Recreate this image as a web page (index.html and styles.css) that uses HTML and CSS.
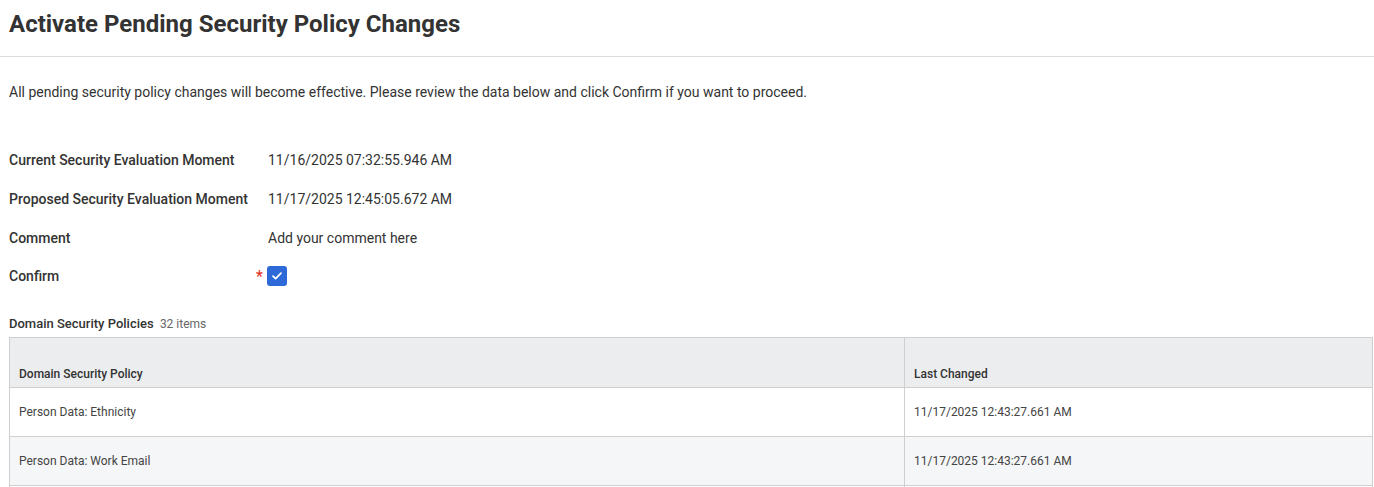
FILE: index.html
```html
<!DOCTYPE html>
<html>
<head>
<meta charset="utf-8">
<link rel="stylesheet" href="styles.css">
</head>
<body>
<header class="page-header">
  <h1 class="title">Activate Pending Security Policy Changes</h1>
</header>
<main class="content">
  <p class="intro">All pending security policy changes will become effective. Please review the data below and click Confirm if you want to proceed.</p>
  <div class="fields">
    <div class="field">
      <div class="label">Current Security Evaluation Moment</div>
      <div class="value">11/16/2025 07:32:55.946 AM</div>
    </div>
    <div class="field">
      <div class="label">Proposed Security Evaluation Moment</div>
      <div class="value">11/17/2025 12:45:05.672 AM</div>
    </div>
    <div class="field">
      <div class="label">Comment</div>
      <div class="value">Add your comment here</div>
    </div>
    <div class="field">
      <div class="label">Confirm<span class="req">*</span></div>
      <div class="value">
        <span class="checkbox">
          <svg width="12" height="10" viewBox="0 0 12 10"><path d="M2 5.2 L4.6 7.6 L10 2.2" fill="none" stroke="#fff" stroke-width="1.8" stroke-linecap="round" stroke-linejoin="round"/></svg>
        </span>
      </div>
    </div>
  </div>
  <div class="section-title">Domain Security Policies <span class="count">32 items</span></div>
  <table class="grid">
    <thead>
      <tr><th class="col1">Domain Security Policy</th><th>Last Changed</th></tr>
    </thead>
    <tbody>
      <tr><td>Person Data: Ethnicity</td><td>11/17/2025 12:43:27.661 AM</td></tr>
      <tr class="alt"><td>Person Data: Work Email</td><td>11/17/2025 12:43:27.661 AM</td></tr>
      <tr><td></td><td></td></tr>
    </tbody>
  </table>
</main>
</body>
</html>
```
FILE: styles.css
```css
html, body {
  margin: 0;
  padding: 0;
  background: #fff;
  font-family: Roboto, "Liberation Sans", Arial, sans-serif;
  color: #333;
  overflow: hidden;
}
.page-header {
  height: 56px;
  border-bottom: 1px solid #dcdcdc;
  display: flex;
  align-items: center;
  padding: 0 9px;
}
.title {
  margin: 0;
  margin-top: -8px;
  font-size: 24px;
  font-weight: 700;
  color: #333;
  letter-spacing: 0;
}
.content {
  padding: 0 0 0 9px;
}
.intro {
  margin: 0;
  padding-top: 26px;
  font-size: 14px;
  line-height: 18px;
  color: #333;
}
.fields {
  margin-top: 40px;
  display: flex;
  flex-direction: column;
}
.field {
  display: flex;
  align-items: center;
  height: 38.67px;
}
.label {
  width: 259px;
  font-size: 14px;
  font-weight: 500;
  color: #333;
  position: relative;
}
.req {
  position: absolute;
  right: 5px;
  top: -1px;
  color: #de2e21;
  font-size: 16px;
  font-weight: 400;
}
.value {
  font-size: 14px;
  color: #333;
  display: flex;
  align-items: center;
}
.checkbox {
  width: 20px;
  height: 20px;
  border-radius: 3px;
  background: #2d6ad8;
  display: inline-flex;
  align-items: center;
  justify-content: center;
  margin-left: -1px;
}
.section-title {
  margin-top: 20px;
  font-size: 13px;
  font-weight: 500;
  line-height: 16px;
  color: #333;
}
.count {
  font-weight: 400;
  font-size: 12px;
  color: #666;
  margin-left: 3px;
}
.grid {
  margin-top: 5px;
  width: 1364px;
  border-collapse: collapse;
  font-size: 12px;
  color: #444;
}
.grid th, .grid td {
  border: 1px solid #cfcfcf;
  text-align: left;
  padding: 0 9px;
}
.grid th {
  background: #ecedef;
  font-weight: 500;
  color: #333;
  height: 50px;
  vertical-align: bottom;
  padding-bottom: 6px;
  box-sizing: border-box;
}
.grid th.col1 {
  width: 895px;
}
.grid td {
  height: 48px;
  vertical-align: middle;
}
.grid tr.alt td {
  background: #f5f6f7;
}
```
